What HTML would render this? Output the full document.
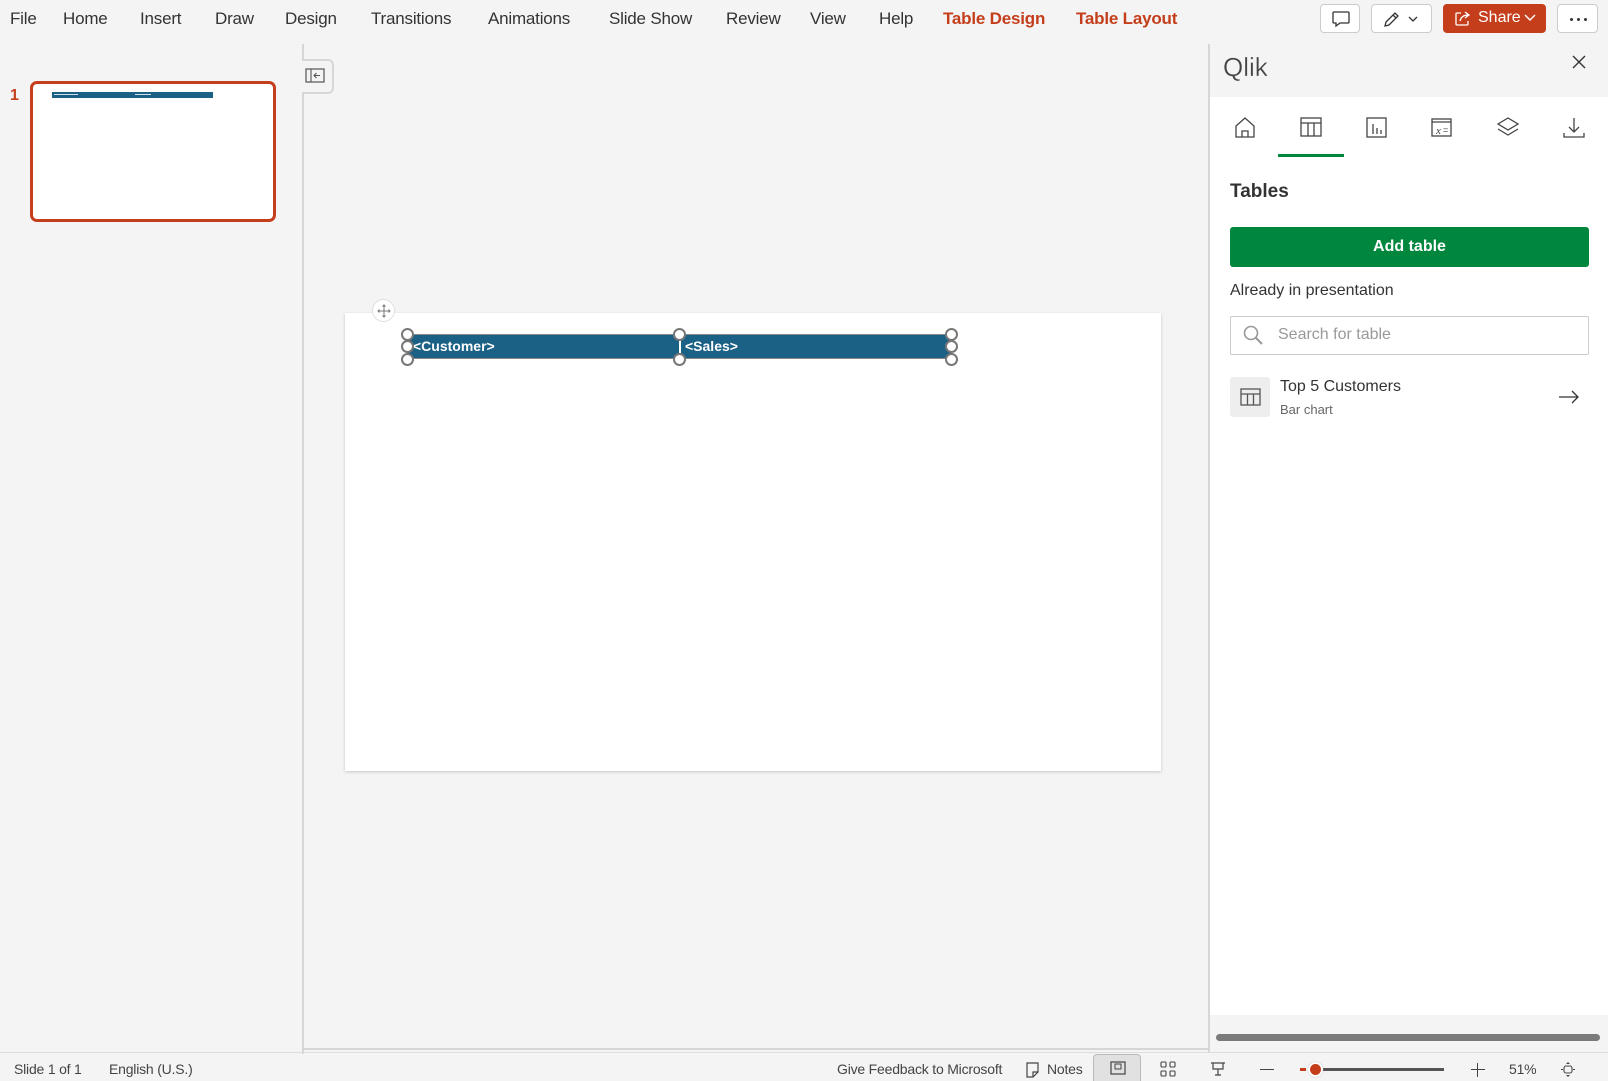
<!DOCTYPE html>
<html><head><meta charset="utf-8"><style>
*{margin:0;padding:0;box-sizing:border-box}
body{width:1608px;height:1081px;background:#f4f4f4;font-family:"Liberation Sans",sans-serif;position:relative;overflow:hidden;color:#333}
.a{position:absolute}
.m{position:absolute;top:9px;font-size:17px;color:#333;white-space:nowrap;letter-spacing:-0.2px}
.r{color:#c43e1c;font-weight:bold}
.btn{position:absolute;top:4px;height:29px;border:1px solid #ccc;border-radius:4px;background:#fff}
.st{position:absolute;top:1061px;font-size:14px;color:#444;white-space:nowrap;letter-spacing:-0.2px}
.h{position:absolute;width:13px;height:13px;border:2px solid #777;border-radius:50%;background:#fff}
.dot{position:absolute;top:13px;width:3px;height:3px;border-radius:50%;background:#333}
</style></head><body>
<div class="m" style="left:10px">File</div>
<div class="m" style="left:63px">Home</div>
<div class="m" style="left:140px">Insert</div>
<div class="m" style="left:215px">Draw</div>
<div class="m" style="left:285px">Design</div>
<div class="m" style="left:371px">Transitions</div>
<div class="m" style="left:488px">Animations</div>
<div class="m" style="left:609px">Slide Show</div>
<div class="m" style="left:726px">Review</div>
<div class="m" style="left:810px">View</div>
<div class="m" style="left:879px">Help</div>
<div class="m r" style="left:943px">Table Design</div>
<div class="m r" style="left:1076px">Table Layout</div>

<div class="btn" style="left:1320px;width:40px"><svg class="a" style="left:10px;top:5px" width="20" height="18" viewBox="0 0 20 18"><path d="M3 2h14a1 1 0 0 1 1 1v9a1 1 0 0 1-1 1H9l-4 3v-3H3a1 1 0 0 1-1-1V3a1 1 0 0 1 1-1z" fill="none" stroke="#333" stroke-width="1.3"/></svg></div>
<div class="btn" style="left:1371px;width:61px"><svg class="a" style="left:10px;top:5px" width="42" height="18" viewBox="0 0 42 18"><path d="M3 16l1-4L13 3l3 3-9 9z M11 5l3 3" fill="none" stroke="#333" stroke-width="1.3"/><path d="M27 7l4 4 4-4" fill="none" stroke="#333" stroke-width="1.3"/></svg></div>
<div class="a" style="left:1443px;top:4px;width:103px;height:29px;background:#c43e1c;border-radius:4px;color:#fff;font-size:16px"><svg class="a" style="left:11px;top:6px" width="18" height="17" viewBox="0 0 18 17"><path d="M7 3H3a1 1 0 0 0-1 1v10a1 1 0 0 0 1 1h10a1 1 0 0 0 1-1v-3 M6 11c1-4 4-6 8-6 M11 2l4 3-4 3" fill="none" stroke="#fff" stroke-width="1.3"/></svg><span class="a" style="left:35px;top:5px">Share</span><svg class="a" style="left:81px;top:10px" width="12" height="8"><path d="M1 1l5 5 5-5" fill="none" stroke="#fff" stroke-width="1.4"/></svg></div>
<div class="btn" style="left:1557px;width:41px"><div class="dot" style="left:12px"></div><div class="dot" style="left:19px"></div><div class="dot" style="left:26px"></div></div>

<!-- thumbnail -->
<div class="a" style="left:10px;top:87px;color:#c43e1c;font-size:16px;font-weight:bold">1</div>
<div class="a" style="left:30px;top:81px;width:246px;height:141px;border:3px solid #c43e1c;border-radius:7px;background:#fff">
<div class="a" style="left:19px;top:8px;width:161px;height:6px;background:#1a6185"></div>
<div class="a" style="left:21px;top:10px;width:24px;height:1px;background:#cfe0ea"></div>
<div class="a" style="left:102px;top:10px;width:16px;height:1px;background:#cfe0ea"></div></div>

<!-- splitter -->
<div class="a" style="left:302px;top:44px;width:2px;height:1010px;background:#d6d6d6"></div>
<div class="a" style="left:302px;top:59px;width:32px;height:35px;border:2px solid #d6d6d6;border-left:none;border-radius:0 6px 6px 0;background:#f4f4f4"></div>
<svg class="a" style="left:305px;top:68px" width="20" height="16" viewBox="0 0 20 16"><rect x="1" y="1" width="18" height="13" fill="none" stroke="#555" stroke-width="1.2"/><path d="M6 1v13 M15 7.5H9 M11.5 5l-2.5 2.5 2.5 2.5" fill="none" stroke="#555" stroke-width="1.1"/></svg>
<div class="a" style="left:303px;top:1048px;width:906px;height:2px;background:#d6d6d6"></div>

<!-- slide -->
<div class="a" style="left:345px;top:313px;width:816px;height:458px;background:#fff;box-shadow:0 1px 3px rgba(0,0,0,.2)"></div>
<div class="a" style="left:372px;top:299px;width:23px;height:23px;border-radius:50%;background:#fff;border:1px solid #e0e0e0"><svg class="a" style="left:4px;top:4px" width="14" height="14" viewBox="0 0 14 14"><path d="M7 1v12M1 7h12M5.5 2.5L7 1l1.5 1.5M5.5 11.5L7 13l1.5-1.5M2.5 5.5L1 7l1.5 1.5M11.5 5.5L13 7l-1.5 1.5" fill="none" stroke="#777" stroke-width="1"/></svg></div>
<div class="a" style="left:407px;top:334px;width:545px;height:25px;background:#1a6185;border:1px solid #888"></div>
<div class="a" style="left:679px;top:340px;width:2px;height:13px;background:#fff"></div>
<div class="a" style="left:413px;top:338px;color:#fff;font-weight:bold;font-size:14px">&lt;Customer&gt;</div>
<div class="a" style="left:685px;top:338px;color:#fff;font-weight:bold;font-size:14px">&lt;Sales&gt;</div>
<div class="h" style="left:401px;top:328px"></div><div class="h" style="left:401px;top:340px"></div><div class="h" style="left:401px;top:353px"></div>
<div class="h" style="left:673px;top:328px"></div><div class="h" style="left:673px;top:353px"></div>
<div class="h" style="left:945px;top:328px"></div><div class="h" style="left:945px;top:340px"></div><div class="h" style="left:945px;top:353px"></div>

<!-- right panel -->
<div class="a" style="left:1208px;top:44px;width:2px;height:1009px;background:#d6d6d6"></div>
<div class="a" style="left:1210px;top:97px;width:398px;height:918px;background:#fff"></div>
<div class="a" style="left:1223px;top:52px;font-size:26px;color:#444;-webkit-text-stroke:0.3px #f4f4f4">Qlik</div>
<svg class="a" style="left:1572px;top:55px" width="14" height="14"><path d="M1 1l12 12M13 1L1 13" stroke="#333" stroke-width="1.4"/></svg>
<svg class="a" style="left:1234px;top:116px" width="360" height="24" viewBox="0 0 360 24">
<g fill="none" stroke="#444" stroke-width="1.3">
<path d="M2 21V10l9-8 9 8v11z M8 21v-6h6v6"/>
<rect x="67" y="2" width="20" height="18"/><path d="M67 7h20M74 7v13M80 7v13"/>
<rect x="133" y="2" width="19" height="19"/><path d="M139 8v10M143 12v6M147 14v4"/>
<rect x="198" y="3" width="19" height="17"/><path d="M198 6h19"/>
<path d="M264 8l10-6 10 6-10 6z M264 13l10 6 10-6"/>
<path d="M340 2v14M335 11l5 5 5-5M330 17v4h20v-4"/>
</g><text x="202" y="18" font-size="11" font-style="italic" font-family="Liberation Serif" fill="#444">x</text><text x="209" y="17" font-size="9" fill="#444">=</text></svg>
<div class="a" style="left:1278px;top:154px;width:66px;height:3px;background:#00873d"></div>
<div class="a" style="left:1230px;top:181px;font-size:19px;font-weight:bold;color:#333">Tables</div>
<div class="a" style="left:1230px;top:227px;width:359px;height:40px;background:#00873d;border-radius:3px;color:#fff;font-weight:bold;font-size:16px;text-align:center;line-height:40px">Add table</div>
<div class="a" style="left:1230px;top:282px;font-size:16px;color:#333">Already in presentation</div>
<div class="a" style="left:1230px;top:316px;width:359px;height:39px;border:1px solid #ccc;border-radius:2px"></div>
<svg class="a" style="left:1243px;top:325px" width="22" height="22"><circle cx="8" cy="8" r="6.5" fill="none" stroke="#999" stroke-width="1.6"/><path d="M13 13l6 6" stroke="#999" stroke-width="2"/></svg>
<div class="a" style="left:1278px;top:326px;font-size:16px;color:#999">Search for table</div>
<div class="a" style="left:1230px;top:377px;width:40px;height:40px;background:#eee;border-radius:3px"><svg class="a" style="left:10px;top:10px" width="21" height="20"><g fill="none" stroke="#555" stroke-width="1.3"><rect x="1" y="2" width="19" height="16"/><path d="M1 7h19M7.5 7v11M13.5 7v11"/></g></svg></div>
<div class="a" style="left:1280px;top:378px;font-size:16px;color:#333">Top 5 Customers</div>
<div class="a" style="left:1280px;top:402px;font-size:13px;color:#666">Bar chart</div>
<svg class="a" style="left:1558px;top:390px" width="22" height="14"><path d="M1 7h19M14 1l6 6-6 6" fill="none" stroke="#333" stroke-width="1.3"/></svg>
<div class="a" style="left:1216px;top:1034px;width:384px;height:7px;background:#7a7a7a;border-radius:4px"></div>

<!-- status -->
<div class="a" style="left:0;top:1052px;width:1608px;height:1px;background:#ddd"></div>
<div class="st" style="left:14px">Slide 1 of 1</div>
<div class="st" style="left:109px">English (U.S.)</div>
<div class="st" style="left:837px">Give Feedback to Microsoft</div>
<svg class="a" style="left:1025px;top:1062px" width="15" height="16"><path d="M2 1h11v9l-5 5H2z M8 15v-5h5" fill="none" stroke="#444" stroke-width="1.2"/></svg>
<div class="st" style="left:1047px">Notes</div>
<div class="a" style="left:1093px;top:1054px;width:48px;height:27px;background:#e1e1e1;border:1px solid #bbb;border-bottom:none;border-radius:4px 4px 0 0"><svg class="a" style="left:16px;top:6px" width="16" height="14"><rect x="1" y="1" width="14" height="12" fill="none" stroke="#444" stroke-width="1.2"/><rect x="5" y="3" width="6" height="5" fill="none" stroke="#444"/></svg></div>
<svg class="a" style="left:1160px;top:1061px" width="16" height="16"><g fill="none" stroke="#444" stroke-width="1.1"><rect x="1" y="1" width="5" height="5" rx="1"/><rect x="10" y="1" width="5" height="5" rx="1"/><rect x="1" y="10" width="5" height="5" rx="1"/><rect x="10" y="10" width="5" height="5" rx="1"/></g></svg>
<svg class="a" style="left:1210px;top:1061px" width="16" height="16"><path d="M1 2h14M3 2v6h10V2M8 8v6M5 14h6" fill="none" stroke="#444" stroke-width="1.2"/></svg>
<div class="a" style="left:1260px;top:1069px;width:14px;height:1px;background:#444"></div>
<div class="a" style="left:1300px;top:1068px;width:6px;height:3px;background:#c43e1c"></div>
<div class="a" style="left:1322px;top:1068px;width:122px;height:3px;background:#555"></div>
<div class="a" style="left:1308px;top:1062px;width:15px;height:15px;border-radius:50%;background:#c43e1c;border:2px solid #fff;box-shadow:0 0 1px #999"></div>
<div class="a" style="left:1471px;top:1069px;width:14px;height:1px;background:#444"></div>
<div class="a" style="left:1477px;top:1063px;width:1px;height:14px;background:#444"></div>
<div class="st" style="left:1509px">51%</div>
<svg class="a" style="left:1560px;top:1061px" width="16" height="17"><path d="M8 1l-2 2h4zM8 16l-2-2h4z" fill="#444"/><rect x="4" y="5" width="8" height="7" rx="2" fill="none" stroke="#444" stroke-width="1.1"/><path d="M1 8.5h2M13 8.5h2" stroke="#444"/></svg>
</body></html>
